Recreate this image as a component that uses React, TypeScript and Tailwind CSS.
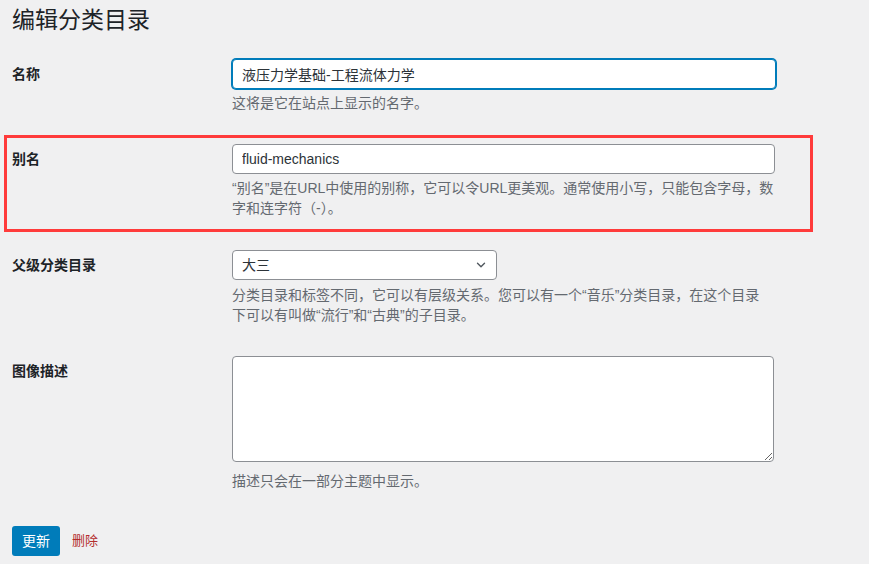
import React from "react"

const font = "font-['Segoe_UI','Liberation_Sans','Noto_Sans_CJK_SC',sans-serif]"

function Label({ children }: { children: React.ReactNode }) {
  return (
    <div className="w-[220px] shrink-0 text-[14px] font-semibold leading-[30px] text-[#1d2327]">
      {children}
    </div>
  )
}

function Desc({ children, className = "" }: { children: React.ReactNode; className?: string }) {
  return <p className={`text-[14px] leading-[20px] text-[#646970] ${className}`}>{children}</p>
}

export default function App() {
  return (
    <div className={`min-h-[564px] w-full bg-[#f0f0f1] pl-[12px] ${font}`}>
      <h1 className="pt-[6px] text-[23px] font-normal leading-[29px] text-[#1d2327]">编辑分类目录</h1>

      {/* 名称 */}
      <div className="mt-[24px] flex">
        <Label>名称</Label>
        <div>
          <input
            readOnly
            defaultValue="液压力学基础-工程流体力学"
            className="h-[30px] w-[544px] rounded-[4px] border border-[#007cba] bg-white px-[9px] text-[14px] text-[#2c3338] shadow-[0_0_0_1px_#007cba] outline-none"
          />
          <Desc className="mt-[4px]">这将是它在站点上显示的名字。</Desc>
        </div>
      </div>

      {/* 别名 - highlighted */}
      <div className="-ml-[8px] mt-[22px] flex w-[809px] border-[3px] border-[#ff3b3b] pb-[11px] pl-[5px] pt-[6px]">
        <Label>别名</Label>
        <div>
          <input
            readOnly
            defaultValue="fluid-mechanics"
            className="h-[30px] w-[543px] rounded-[4px] border border-[#8c8f94] bg-white px-[9px] text-[14px] text-[#2c3338] outline-none"
          />
          <Desc className="mt-[4px] w-[552px]">
            “别名”是在URL中使用的别称，它可以令URL更美观。通常使用小写，只能包含字母，数字和连字符（-）。
          </Desc>
        </div>
      </div>

      {/* 父级分类目录 */}
      <div className="mt-[18px] flex">
        <Label>父级分类目录</Label>
        <div>
          <div className="flex h-[30px] w-[265px] items-center justify-between rounded-[4px] border border-[#8c8f94] bg-white pl-[9px] pr-[8px] text-[14px] text-[#2c3338]">
            <span>大三</span>
            <svg width="14" height="14" viewBox="0 0 20 20" fill="none">
              <path d="M5 7.5l5 5 5-5" stroke="#50575e" strokeWidth="2" strokeLinecap="round" strokeLinejoin="round" />
            </svg>
          </div>
          <Desc className="mt-[5px] w-[541px]">
            分类目录和标签不同，它可以有层级关系。您可以有一个“音乐”分类目录，在这个目录下可以有叫做“流行”和“古典”的子目录。
          </Desc>
        </div>
      </div>

      {/* 图像描述 */}
      <div className="mt-[31px] flex">
        <Label>图像描述</Label>
        <div>
          <textarea
            readOnly
            className="block h-[106px] w-[542px] rounded-[4px] border border-[#8c8f94] bg-white outline-none"
          />
          <Desc className="mt-[9px]">描述只会在一部分主题中显示。</Desc>
        </div>
      </div>

      <div className="mt-[35px] flex items-center gap-[12px]">
        <button className="h-[30px] w-[48px] rounded-[3px] bg-[#007cba] text-[14px] text-white">更新</button>
        <a className="text-[13px] text-[#b32d2e]">删除</a>
      </div>
    </div>
  )
}
